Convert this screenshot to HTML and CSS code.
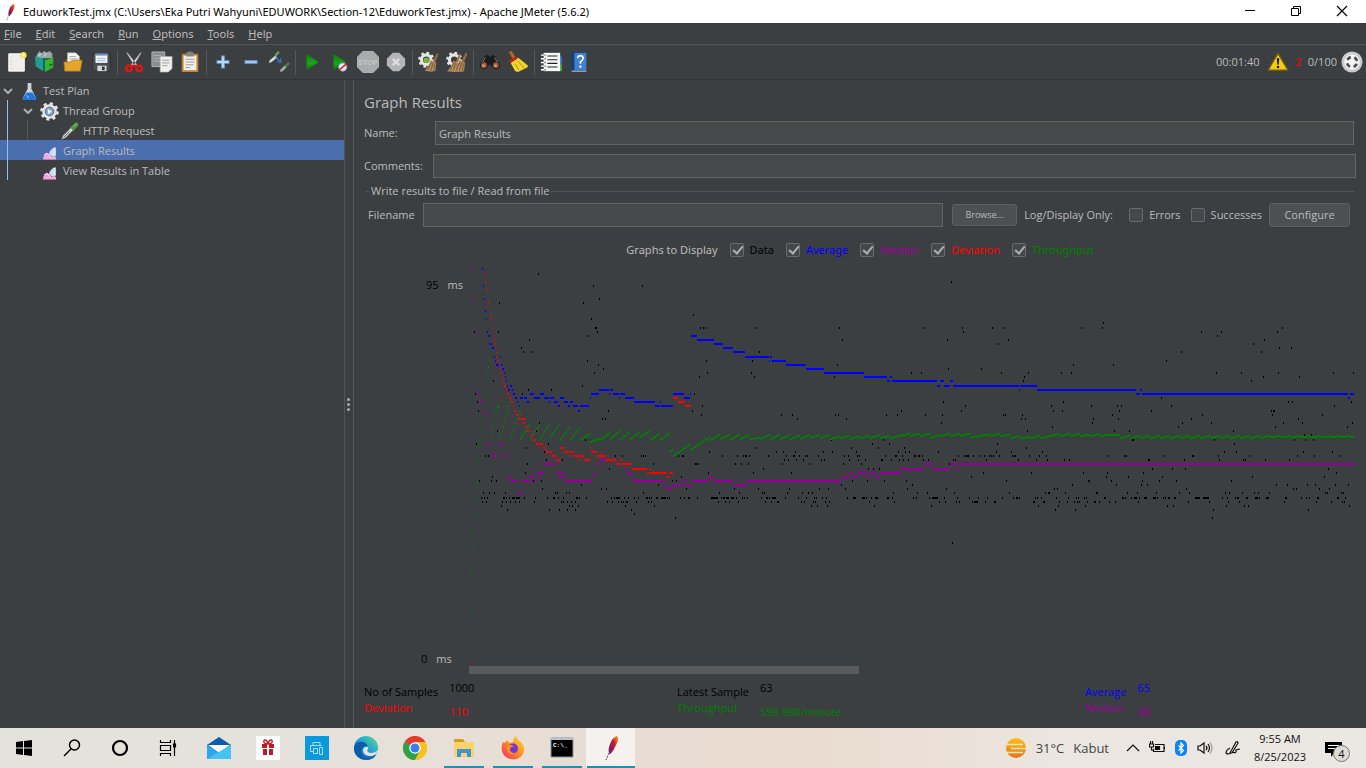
FILE: index.html
```html
<!DOCTYPE html>
<html lang="en">
<head>
<meta charset="utf-8">
<title>EduworkTest.jmx - Apache JMeter (5.6.2)</title>
<link rel="stylesheet" href="styles.css">
</head>
<body>
<svg class="defs" width="0" height="0" aria-hidden="true">
  <defs>
    <linearGradient id="feather" x1="1" y1="0" x2="0" y2="1"><stop offset="0" stop-color="#f79a1c"/><stop offset=".4" stop-color="#d22128"/><stop offset=".7" stop-color="#97144d"/><stop offset="1" stop-color="#6b2c91"/></linearGradient>
    <linearGradient id="green" x1="0" y1="0" x2="0" y2="1"><stop offset="0" stop-color="#0d7a0d"/><stop offset=".6" stop-color="#18a818"/><stop offset="1" stop-color="#0a6b0a"/></linearGradient>
    <linearGradient id="edge" x1="0" y1="1" x2="1" y2="0"><stop offset="0" stop-color="#0c59a4"/><stop offset=".5" stop-color="#1b9de2"/><stop offset="1" stop-color="#5fe07a"/></linearGradient>
    <linearGradient id="fox" x1="1" y1="0" x2="0" y2="1"><stop offset="0" stop-color="#ffe226"/><stop offset=".5" stop-color="#ff8a1e"/><stop offset="1" stop-color="#f0267b"/></linearGradient>
    <linearGradient id="sun" x1="0" y1="0" x2="0" y2="1"><stop offset="0" stop-color="#fbc015"/><stop offset="1" stop-color="#e8731a"/></linearGradient>
    <symbol id="i-feather" viewBox="0 0 24 24"><path d="M17.500 0c2 1 2 4 0 8l-3 6-3 4-1.500-.5-.5-3.500c.5-4 2-8 4-11z" fill="url(#feather)"/><path d="M10 17l-3 7M14.500 5l-4 11" stroke="#6d2a6a" fill="none" stroke-dasharray="2 1"/></symbol>
    <symbol id="i-graph" viewBox="0 0 15 14"><path d="M1 13.500l.5-3.500 3-3 3 1 2 3 3-1 1.500 1v2.500z" fill="#f2a6dc"/><path d="M7 8c1-4 3-6 6.500-7v8l-3 2z" fill="#c7dcf5"/><path d="M13 2v8" stroke="#fff"/><path d="M2 9l3-2 4 5" fill="none" stroke="#ffd6f2"/></symbol>
    <symbol id="i-cog" viewBox="0 0 24 24"><circle cx="12" cy="12" r="7" fill="none" stroke="#e5e5e2" stroke-width="4.500"/><circle cx="12" cy="12" r="10" fill="none" stroke="#e5e5e2" stroke-width="3.500" stroke-dasharray="3.900 3.954"/></symbol>
    <symbol id="i-pipette" viewBox="0 0 24 24"><path d="M2 22l2-5L14 7l3 3L7 20z" fill="#d8ddd8" stroke="#667" stroke-width=".8"/><path d="M5 19l7-7" stroke="#4e6b4e" stroke-width="1.200"/><path d="M13 6l2-1 4-4q3-1 4 1t-1 4l-4 4-1 2z" fill="#4b9b3b"/><path d="M17 6l4-4" stroke="#9bd38b"/></symbol>
    <symbol id="i-broom" viewBox="0 0 24 24"><path d="M20 0l2 1-4 10-3-1z" fill="#9b6d3d"/><path d="M12 9l7 3-1 11-5 1-9-1c4-4 6-9 8-14z" fill="#b58d63"/><path d="M13 11L8 22m7-10l-3 11m5-10l-1 10" stroke="#6b4926" stroke-width="1"/></symbol>
  </defs>
</svg>

<header class="titlebar">
  <svg class="ic16"><use href="#i-feather"/></svg>
  <h1 class="title">EduworkTest.jmx (C:\Users\Eka Putri Wahyuni\EDUWORK\Section-12\EduworkTest.jmx) - Apache JMeter (5.6.2)</h1>
  <div class="winbuttons">
    <button aria-label="Minimize"><svg width="12" height="12"><path d="M1 5.500h10" stroke="#000"/></svg></button>
    <button aria-label="Restore"><svg width="12" height="12" fill="none" stroke="#000"><path d="M1.500 3.500h7v7h-7zM3.500 3.500v-2h7v7h-2"/></svg></button>
    <button aria-label="Close"><svg width="12" height="12"><path d="M1 1l10 10M11 1L1 11" stroke="#000" stroke-width="1.200"/></svg></button>
  </div>
</header>

<nav class="menubar" aria-label="Main menu">
  <button><u>F</u>ile</button><button><u>E</u>dit</button><button><u>S</u>earch</button><button><u>R</u>un</button><button><u>O</u>ptions</button><button><u>T</u>ools</button><button><u>H</u>elp</button>
</nav>

<div class="toolbar" role="toolbar">
  <button aria-label="New"><svg viewBox="0 0 24 24"><path d="M3 3h17v19H3z" fill="#eeeeec" stroke="#fff"/><path d="M5.500 6v13" stroke="#bbb" stroke-dasharray="1 3"/><circle cx="19" cy="4.500" r="3.500" fill="#f5e04a"/><circle cx="19" cy="4.500" r="1.500" fill="#fffbd0"/></svg></button>
  <button aria-label="Templates"><svg viewBox="0 0 24 24"><path d="M3 8V4l3-4 2 3 3-3 3 2 3-2 3 3v5z" fill="#9aa7a5"/><path d="M5 6l3-4M11 6l3-4" stroke="#dfe6e5"/><path d="M1 6l9 2v14l-8-5z" fill="#1e9e8f"/><path d="M10 8l3 1v13l-3-1z" fill="#16695f"/><path d="M12 10l9-3v11l-9 5z" fill="#35b62a"/><path d="M17 14h3v2h-3z" fill="#12610e"/></svg></button>
  <button aria-label="Open"><svg viewBox="0 0 24 24"><path d="M4 9h16v12H4z" fill="#8f5b0a"/><path d="M6 2h9l4 4v9H6z" fill="#f4f4f2" stroke="#bbb" stroke-width=".5"/><path d="M8 6h7M8 8.500h9" stroke="#aaa"/><path d="M2 12h7l2-2h11l-2 12H3z" fill="#e3a52c" stroke="#a9700f" stroke-width=".8"/></svg></button>
  <button aria-label="Save"><svg viewBox="0 0 24 24"><path d="M3 3h19v19H5l-2-2z" fill="#4a4d52" stroke="#222" stroke-width=".6"/><path d="M6 3h13v10H6z" fill="#f2f5f9"/><path d="M6 3h13v2H6z" fill="#5c8fc9"/><path d="M8 8h9M8 10.500h9" stroke="#9fb4cc"/><path d="M8 16h10v6H8z" fill="#d5d7da"/><path d="M13 17h3v4h-3z" fill="#333"/></svg></button>
  <span class="sep"></span>
  <button aria-label="Cut"><svg viewBox="0 0 24 24"><path d="M4 2q0-1 1 0l11 14-3 1zM20 2q0-1-1 0L8 16l3 1z" fill="#dfe2e2" stroke="#888" stroke-width=".5"/><g fill="none" stroke="#d81818" stroke-width="3"><circle cx="6.500" cy="19" r="3"/><circle cx="17.500" cy="19" r="3"/></g><path d="M9 15h6v2H9z" fill="#c51414"/></svg></button>
  <button aria-label="Copy"><svg viewBox="0 0 24 24"><path d="M1 1h14v16H1z" fill="#8a8d8f" stroke="#b5b7b8"/><path d="M3 5h8M3 8h8M3 11h8" stroke="#b5b7b8"/><path d="M10 6h13v13l-4 4h-9z" fill="#efefed" stroke="#aaa" stroke-width=".7"/><path d="M12 10h8M12 13h8M12 16h6" stroke="#999"/></svg></button>
  <button aria-label="Paste"><svg viewBox="0 0 24 24"><rect x="3" y="3" width="18" height="20" rx="1" fill="#c78423"/><path d="M5 5h14v16H5z" fill="#efefed"/><path d="M8 2q4-3 8 0v4H8z" fill="#83867c"/><path d="M7 9h10M7 12h10M7 15h9M7 18h5" stroke="#999"/></svg></button>
  <span class="sep"></span>
  <button aria-label="Expand all"><svg viewBox="0 0 24 24"><path d="M12 5v14M5 12h14" stroke="#72a3da" stroke-width="4"/><path d="M12 6v12M6 12h12" stroke="#bcd8f5" stroke-width="2"/></svg></button>
  <button aria-label="Collapse all"><svg viewBox="0 0 24 24"><path d="M5 12h14" stroke="#72a3da" stroke-width="4"/><path d="M6 12h12" stroke="#a6c8ee" stroke-width="2"/></svg></button>
  <button aria-label="Toggle"><svg viewBox="0 0 24 24"><path d="M1 13l1-3 6-5 2 2-6 5z" fill="#d8ddd8"/><path d="M8 5l4-4" stroke="#5ba84a" stroke-width="2.500"/><path d="M8 7l6 5m0-4v4h-4" stroke="#3a78d0" stroke-width="1.300" fill="none"/><path d="M13 23l1-3 5-5 2 2-5 5z" fill="#a9ada9"/><path d="M19 17l4-4" stroke="#497c3f" stroke-width="2.500"/></svg></button>
  <span class="sep"></span>
  <button aria-label="Start"><svg viewBox="0 0 24 24"><path d="M6 3l13 9L6 21z" fill="url(#green)"/></svg></button>
  <button aria-label="Start no pauses"><svg viewBox="0 0 24 24"><path d="M5 3l13 9-13 9z" fill="url(#green)"/><circle cx="15" cy="17.500" r="4.500" fill="#dce9f8" stroke="#7c9cc2"/><path d="M11 21l8-7" stroke="#d22" stroke-width="1.800"/></svg></button>
  <button aria-label="Stop" disabled><svg viewBox="0 0 24 24"><path d="M7 0h10l7 7v10l-7 7H7l-7-7V7z" fill="#a9abac" stroke="#b8babb"/><text x="12" y="15" class="stoptext">STOP</text></svg></button>
  <button aria-label="Shutdown" disabled><svg viewBox="0 0 24 24"><path d="M8.500 2h7L22 8.500v7L15.500 22h-7L2 15.500v-7z" fill="#b3b5b6"/><path d="M8.500 8.500l7 7m0-7l-7 7" stroke="#dcdedf" stroke-width="2.800"/></svg></button>
  <span class="sep"></span>
  <button aria-label="Clear"><svg viewBox="0 0 24 24"><use href="#i-cog" x="0" y="0" width="18" height="19"/><circle cx="9" cy="10" r="3" fill="#75b932"/><use href="#i-broom" x="4" y="1" width="20" height="23"/></svg></button>
  <button aria-label="Clear all"><svg viewBox="0 0 24 24"><use href="#i-cog" x="0" y="0" width="18" height="19"/><use href="#i-broom" x="-2" y="2" width="20" height="22"/><use href="#i-broom" x="4" y="1" width="21" height="23"/></svg></button>
  <span class="sep"></span>
  <button aria-label="Search"><svg viewBox="0 0 24 24"><path d="M6 6l3-2 2 2h2l2-2 3 2 5 10-5 4-5-5h-2l-5 5-5-4z" fill="#1b1b1b"/><g stroke="#111"><circle cx="5.500" cy="15.500" r="4" fill="#8e5737"/><circle cx="18.500" cy="15.500" r="4" fill="#8e5737"/></g><path d="M7 7l-3 5M17 7l3 5" stroke="#888"/><circle cx="5" cy="16" r="1.500" fill="#d29a77"/><circle cx="18" cy="16" r="1.500" fill="#d29a77"/></svg></button>
  <button aria-label="Reset search"><svg viewBox="0 0 24 24"><path d="M2 1l3-1 5 8-3 2z" fill="#b06a1c"/><path d="M4 13l8-6 11 9-1 2-10 5-3-1z" fill="#f0d52c"/><path d="M9 14l4 7m-1-10l7 8" stroke="#a88d10"/><path d="M2 11l7-5 3 2-8 5z" fill="#c9201c"/></svg></button>
  <span class="sep"></span>
  <button aria-label="Function helper"><svg viewBox="0 0 24 24"><path d="M20 6h4v14h-4z" fill="#2a6fd0"/><path d="M20 15h4v7h-4z" fill="#38a52c"/><path d="M4 2h18v20H4z" fill="#f6f6f4"/><path d="M8 5.500h11M8 9.500h11M8 13.500h11M8 17.500h11" stroke="#222" stroke-width="1.100"/><path d="M1 4.500h4M1 8.500h4M1 12.500h4M1 16.500h4M1 20.500h4" stroke="#fff" stroke-width="1.500"/><path d="M5 4.500h1M5 8.500h1M5 12.500h1M5 16.500h1M5 20.500h1" stroke="#222" stroke-width="1.500"/></svg></button>
  <button aria-label="Help"><svg viewBox="0 0 24 24"><path d="M3 1h16v21H3z" fill="#173f70"/><path d="M7 2h13v19H7z" fill="#3f7fd4"/><path d="M4 22h16" stroke="#ddd"/><path d="M10.500 8q0-3 3-3t3 3q0 2-3 4v2" fill="none" stroke="#fff" stroke-width="1.800"/><circle cx="13.500" cy="17" r="1.300" fill="#fff"/></svg></button>
  <div class="status">
    <span>00:01:40</span>
    <button aria-label="Show log"><svg viewBox="0 0 24 24"><path d="M12 2.500L23 21H1z" fill="#f3cb13" stroke="#6b5a12" stroke-width="1.500" stroke-linejoin="round"/><path d="M10.700 8h2.600l-.6 7h-1.400z" fill="#111"/><circle cx="12" cy="17.500" r="1.300" fill="#111"/></svg></button>
    <span class="errors">2</span>
    <span>0/100</span>
    <svg viewBox="0 0 24 24" class="ic22"><circle cx="12" cy="12" r="11.500" fill="#c9cbca"/><circle cx="12" cy="12" r="8.500" fill="#f3f3f2"/><circle cx="12" cy="12" r="5.500" fill="none" stroke="#4c4f50" stroke-width="3" stroke-dasharray="4.600 4.040" stroke-dashoffset="-2"/></svg>
  </div>
</div>

<main class="workspace">
  <nav class="tree" aria-label="Test plan">
    <ul>
      <li class="row d0"><svg class="arrow" viewBox="0 0 10 6"><path d="M1 1l4 4 4-4"/></svg><svg class="node" viewBox="0 0 20 20"><path d="M8 1h4v6l5 10q0 2-2 2H5q-2 0-2-2L8 7z" fill="#c9d4de"/><path d="M7 11h6l4 6q0 2-2 2H5q-2 0-2-2z" fill="#2377d8"/><path d="M7 14l2 3" stroke="#a5d0ff"/></svg>Test Plan</li>
      <li class="row d1"><svg class="arrow" viewBox="0 0 10 6"><path d="M1 1l4 4 4-4"/></svg><svg class="node" viewBox="0 0 24 24"><use href="#i-cog"/><circle cx="12" cy="12" r="5.500" fill="#87a5d3" stroke="#41547a"/><path d="M10 9l5 3-5 3z" fill="#fff"/></svg>Thread Group</li>
      <li class="row d2"><svg class="node" viewBox="0 0 24 24"><use href="#i-pipette"/></svg>HTTP Request</li>
      <li class="row d1 selected"><span class="arrow"></span><svg class="node leaf"><use href="#i-graph"/></svg>Graph Results</li>
      <li class="row d1"><span class="arrow"></span><svg class="node leaf"><use href="#i-graph"/></svg>View Results in Table</li>
    </ul>
  </nav>
  <div class="splitter"><i></i><i></i><i></i></div>
  <section class="panel">
    <h2>Graph Results</h2>
    <div class="field name"><label for="name">Name:</label><input id="name" type="text" value="Graph Results"></div>
    <div class="field comments"><label for="comments">Comments:</label><input id="comments" type="text"></div>
    <fieldset class="filebox">
      <legend>Write results to file / Read from file</legend>
      <div class="filerow">
        <label for="file">Filename</label><input id="file" type="text">
        <button class="btn small">Browse...</button>
        <span class="only">Log/Display Only:</span>
        <label class="check"><input type="checkbox">Errors</label>
        <label class="check"><input type="checkbox">Successes</label>
        <button class="btn">Configure</button>
      </div>
    </fieldset>
    <div class="series">
      <span>Graphs to Display</span>
      <label class="check black"><input type="checkbox" checked>Data</label>
      <label class="check blue"><input type="checkbox" checked>Average</label>
      <label class="check purple"><input type="checkbox" checked>Median</label>
      <label class="check red"><input type="checkbox" checked>Deviation</label>
      <label class="check green"><input type="checkbox" checked>Throughput</label>
    </div>
    <div class="chart">
      <div class="axis"><span><b>95</b>ms</span><span class="zero"><b>0</b>ms</span></div>
      <div class="plot"><svg id="plot" width="887" height="402" shape-rendering="crispEdges"></svg><div class="scroll"></div></div>
    </div>
    <dl class="totals">
      <div class="col"><div class="names"><dt class="black">No of Samples</dt><dt class="red">Deviation</dt></div><div class="vals"><dd class="black">1000</dd><dd class="red">110</dd></div></div>
      <div class="col"><div class="names"><dt class="black">Latest Sample</dt><dt class="green">Throughput</dt></div><div class="vals"><dd class="black">63</dd><dd class="green">598.988/minute</dd></div></div>
      <div class="col"><div class="names"><dt class="blue">Average</dt><dt class="purple">Median</dt></div><div class="vals"><dd class="blue">65</dd><dd class="purple">48</dd></div></div>
    </dl>
  </section>
</main>

<footer class="taskbar">
  <div class="apps system">
    <button aria-label="Start menu"><svg viewBox="0 0 24 24"><path d="M4 6l7-1v6.500H4zM12 5l8-1v7.500h-8zM4 12.500h7V19l-7-1zM12 12.500h8V20l-8-1z"/></svg></button>
    <button aria-label="Search"><svg viewBox="0 0 24 24" fill="none" stroke="#000" stroke-width="1.500"><circle cx="14.500" cy="9" r="5"/><path d="M11 13l-7 7"/></svg></button>
    <button aria-label="Cortana"><svg viewBox="0 0 24 24" fill="none" stroke="#000" stroke-width="2.200"><circle cx="12" cy="12" r="7"/></svg></button>
    <button aria-label="Task view"><svg viewBox="0 0 24 24" fill="none" stroke="#000" stroke-width="1.200"><path d="M4.500 4v2.500h10V4M4.500 20v-2.500h10V20M4.500 9.500h10v5h-10zM18.500 4v16"/><path d="M17.500 8h2v3h-2z" fill="#000"/></svg></button>
  </div>
  <div class="apps">
    <button aria-label="Mail"><svg viewBox="0 0 24 24"><path d="M0 9L12 1l12 8v14H0z" fill="#0b5cad"/><path d="M1 9h22l-11 8z" fill="#f5f6f8"/><path d="M0 9l12 8-12 6z" fill="#2ba8ec"/><path d="M24 9v14H0z" fill="#45c3f2"/></svg></button>
    <button aria-label="Rewards"><svg viewBox="0 0 24 24"><path fill="#fff" d="M0 0h24v24H0z"/><path d="M6 8h5v4H6zM13 8h5v4h-5zM7 13h4v6H7zM13 13h4v6h-4z" fill="#c5171f"/><path d="M12 8c-5 0-5-4-3-4 2 0 3 4 3 4s1-4 3-4c2 0 2 4-3 4z" fill="none" stroke="#c5171f" stroke-width="1.300"/></svg></button>
    <button aria-label="Printer"><svg viewBox="0 0 24 24"><path fill="#0a99dc" d="M0 0h24v24H0z"/><g fill="none" stroke="#d5effb" stroke-width=".8"><path d="M8 9.500V6.500h7v3M8 15.500H5.500v-6h11M8.500 12.500h4v5h-4zM14.500 11.500h3v7h-3z"/></g></svg></button>
    <button aria-label="Edge"><svg viewBox="0 0 24 24"><circle cx="12" cy="12" r="12" fill="url(#edge)"/><path d="M0 12C1 4 12 4 14 11c-4-2-8 2-6 7 2 4 9 4 14 1-4 6-13 6-18 2Q0 18 0 12z" fill="#0d5cab"/><path d="M14 11c1 2-2 3 0 5s7 1 10-2q-2 7-9 6-6-1-6-6 1-4 5-3z" fill="#e5e1dc"/><path d="M8 18q3 5 14 1-4 6-13 4z" fill="#1565b4"/></svg></button>
    <button aria-label="Chrome"><svg viewBox="0 0 24 24"><circle cx="12" cy="12" r="12" fill="#fbc116"/><path d="M12 12L1.600 6a12 12 0 0 1 20.800 0z" fill="#e33b2e"/><path d="M12 12L1.600 6A12 12 0 0 0 12 24l5-9z" fill="#2ba24c"/><path d="M12 6h10.400a12 12 0 0 1-10.400 18l5-9z" fill="#fbc116"/><circle cx="12" cy="12" r="5.800" fill="#fff"/><circle cx="12" cy="12" r="4.500" fill="#3b7ded"/></svg></button>
    <button class="open" aria-label="File Explorer"><svg viewBox="0 0 24 24"><path d="M2 3h9l2 3h9v14H2z" fill="#d99a1c"/><path d="M2 6h20v15H2z" fill="#f9d268"/><path d="M5 21v-8h14v8h-4v-4H9v4z" fill="#3c93d6"/></svg></button>
    <button class="open" aria-label="Firefox"><svg viewBox="0 0 24 24"><path d="M2 6l2 1 2-3 2 3q3-1 4-1 0-4 3-6 1 4 5 6 4 4 3 9-2 8-10 8.500Q3 23 1 15 0 10 2 6z" fill="url(#fox)"/><circle cx="12" cy="12.500" r="5" fill="#6a3bd1"/><path d="M6 9q5-1 7 2-3-1-4 2 0 4 5 4-5 3-8-2z" fill="#ff8a26"/></svg></button>
    <button class="open" aria-label="Command Prompt"><svg viewBox="0 0 24 24"><path d="M1 2h22v19H1z" fill="#000" stroke="#8f9499"/><path d="M1 2h22v2H1z" fill="#b8c3cf"/><text x="3" y="11" class="cmd">C:\_</text></svg></button>
    <button class="open active" aria-label="JMeter"><svg><use href="#i-feather"/></svg></button>
  </div>
  <div class="tray">
    <button class="weather"><svg width="24" height="24" viewBox="0 0 24 24"><circle cx="13" cy="12" r="10" fill="url(#sun)"/><path d="M4 8.500h16M8 12.500h16M2 16.500h18" stroke="#f7e2b5" stroke-width="1.500"/></svg><span>31°C</span><span>Kabut</span></button>
    <div class="trayicons">
      <svg viewBox="0 0 16 16"><path d="M2 11l6-6 6 6"/></svg>
      <svg viewBox="0 0 16 16"><path d="M6 4.500h9v7H4.500V9M15.500 7v2M3.500 1v3M1.500 1v3M.5 4h4v3h-4zM2.500 7v3h2"/><path d="M6.500 6.500h4v3h-4z" fill="#000"/></svg>
      <svg viewBox="0 0 16 16"><rect x="2" y="0" width="12" height="16" rx="5" fill="#0a84f5" stroke="none"/><path d="M5.500 5.500l5 5L8 13V3l2.500 2.500-5 5" stroke="#fff"/></svg>
      <svg viewBox="0 0 16 16"><path d="M1 6h2l4-3v10l-4-3H1zM9 6q2 2 0 4M11 4q3 4 0 8"/><path d="M13 2.500q4 5.500 0 11" stroke="#999"/></svg>
      <svg class="pen" viewBox="0 0 16 16"><path d="M5 13L11 2q2-1 2 1L7 13zM5 8q-4 2-4 5 2 2 5 0M7 12q5 2 4-2l4-1"/></svg>
    </div>
    <time class="clock" datetime="2023-08-25T09:55"><span>9:55 AM</span><span>8/25/2023</span></time>
    <button class="notes" aria-label="Notifications"><svg width="17" height="16"><path d="M0 1h17v11H9l-3 4v-4H0z"/><path d="M3 4.500h11M3 7.500h11" stroke="#fff"/></svg><span class="badge">4</span></button>
  </div>
</footer>
<script src="chart.js"></script>
</body>
</html>
```
FILE: styles.css
```css
* { box-sizing: border-box; }
body {
  margin: 0;
  min-height: 100vh;
  display: flex;
  flex-direction: column;
  background: #3c3f41;
  color: #bbbbbb;
  font: 11px/16px "Open Sans", "Noto Sans", sans-serif;
}
button, input { font: inherit; color: inherit; }
button { border: 0; background: none; padding: 0; margin: 0; }
ul, dl, dd, h1, h2 { margin: 0; padding: 0; font-weight: normal; }
svg { display: block; }
.defs { position: absolute; }
.black { color: #000; }
.blue { color: #0000ff; }
.purple { color: #990099; }
.red { color: #ff0000; }
.green { color: #008000; }

.titlebar { display: flex; align-items: center; height: 23px; padding-left: 2px; background: #fff; color: #000; }
.ic16 { width: 16px; height: 16px; }
.title { margin-left: 5px; font: 11px/16px "Noto Sans", sans-serif; white-space: nowrap; }
.winbuttons { margin-left: auto; display: flex; align-self: stretch; }
.winbuttons button { width: 46px; display: flex; align-items: center; justify-content: center; padding: 0 2px 2px 0; }

.menubar { display: flex; gap: 14px; height: 22px; padding: 0 4px; border-bottom: 1px solid #515355; font: 11px/16px "Noto Sans", sans-serif; }

.toolbar { display: flex; align-items: center; height: 35px; padding: 0 3px; border-bottom: 1px solid #323537; }
.toolbar button { flex: none; width: 28px; height: 28px; display: flex; align-items: center; justify-content: center; }
.toolbar button svg { width: 22px; height: 22px; }
.sep { width: 1px; height: 25px; margin: 0 2px; background: #555759; }
.stoptext { font: bold 8px "Liberation Sans", sans-serif; fill: #c4c6c7; text-anchor: middle; }
.status { margin-left: auto; display: flex; align-items: center; gap: 4px; }
.ic22 { width: 22px; height: 22px; }
.errors { color: #ff0000; margin-right: 2px; }

.workspace { flex: 1; display: flex; min-height: 0; }
.tree { width: 345px; border-right: 1px solid #515355; }
.tree ul { list-style: none; }
.row { position: relative; display: flex; align-items: center; height: 20px; padding-top: 2px; }
.d0 { padding-left: 3px; }
.d1 { padding-left: 23px; }
.d2 { padding-left: 60px; }
.d1::before, .d2::before { content: ""; position: absolute; left: 7px; top: 0; bottom: 0; width: 1px; background: #8cc4f0; }
.d2::after { content: ""; position: absolute; left: 27px; top: 0; bottom: 0; width: 1px; background: #56595b; }
.selected { background: #4b6eaf; }
.arrow { width: 10px; height: 6px; margin-right: 7px; fill: none; stroke: #adadad; stroke-width: 2; }
.node { width: 19px; height: 19px; margin-right: 4px; }
.leaf { width: 15px; height: 14px; margin: 4px 6px 0 2px; }

.splitter { width: 9px; padding-right: 2px; border-right: 1px solid #555759; display: flex; flex-direction: column; align-items: center; justify-content: center; gap: 2px; }
.splitter i { width: 3px; height: 3px; border-radius: 2px; background: #adadad; }

.panel { flex: 1; min-width: 0; display: flex; flex-direction: column; padding: 11px 10px 8px; }
.panel h2 { font-size: 15px; line-height: 22px; margin-bottom: 8px; }
.field { display: flex; align-items: center; margin-bottom: 9px; }
.field input, .filerow input[type="text"] { flex: 1; min-width: 0; height: 24px; padding: 0 3px; background: #45494a; border: 1px solid #646464; border-radius: 0; }
.name label { width: 71px; }
.name { margin-right: 2px; }
.comments label { width: 69px; }
.filebox { min-width: 0; margin: -4px 2px 0; padding: 0 4px 0 2px; border: 0; border-top: 1px solid #515355; }
.filebox legend { padding: 0 2px; margin-left: 1px; line-height: 16px; }
.filerow { display: flex; align-items: center; padding-top: 4px; }
.filerow > label:first-child { width: 55px; }
.btn { height: 24px; width: 81px; margin-left: 7px; border: 1px solid #5e6060; border-radius: 3px; background: #4c5052; box-shadow: 0 1px #35383a; }
.btn.small { width: 65px; height: 22px; margin: 0 7px 0 9px; font-size: 9px; }
.only { width: 105px; }
.check { display: flex; align-items: center; gap: 6px; }
.check + .check { margin-left: 10px; }
.check input { appearance: none; width: 14px; height: 14px; margin: 0; border: 1px solid #6b6b6b; border-radius: 2px; background: #43494a; }
.check input:checked::before { content: ""; display: block; width: 4px; height: 8px; margin: 0 0 0 4px; border: solid #b0b0b0; border-width: 0 2px 2px 0; transform: rotate(40deg); }
.series { display: flex; justify-content: center; align-items: center; gap: 12px; height: 24px; margin-top: 11px; font-family: "Noto Sans", sans-serif; }
.series .check + .check { margin-left: 0; }

.chart { flex: 1; display: flex; margin-top: 2px; }
.axis { width: 105px; display: flex; flex-direction: column; justify-content: space-between; padding: 13px 0 7px; }
.axis span { display: flex; gap: 9px; padding-left: 62px; }
.axis .zero { padding-left: 57px; }
.axis b { font-weight: normal; color: #000; }
.plot { flex: 1; min-width: 0; overflow: hidden; display: flex; flex-direction: column; justify-content: flex-end; }
.scroll { width: 44%; height: 8px; background: #595b5d; }
.totals { display: grid; grid-template-columns: 313fr 408fr 271fr; margin-top: 6px; }
.col { display: flex; gap: 11px; }
.names { padding-top: 4px; }
.vals { display: flex; flex-direction: column; gap: 8px; }

.taskbar { display: flex; height: 40px; background: linear-gradient(90deg, #e4e2dc, #e6e1db 25%, #e9dcd2 48%, #eadcd0 60%, #ebe6e1 78%, #ebe7e3); color: #111; }
.apps { display: flex; }
.apps button { width: 49px; display: flex; align-items: center; justify-content: center; }
.apps.system button { width: 48px; }
.apps.system { margin-right: 2px; }
.apps svg { width: 24px; height: 24px; }
.apps .open { background: linear-gradient(#0a99bd, #0a99bd) center bottom / 40px 2px no-repeat; }
.apps .active { background: linear-gradient(#0a99bd, #0a99bd) center bottom / 48px 2px no-repeat #f5f1ee; }
.cmd { font: bold 6px "Liberation Mono", monospace; fill: #fff; }
.tray { margin-left: auto; display: flex; align-items: center; padding-right: 17px; }
.weather { display: flex; align-items: center; gap: 9px; font-size: 13px; color: #444; }
.trayicons { display: flex; gap: 8px; margin-left: 16px; }
.trayicons svg { width: 16px; height: 16px; fill: none; stroke: #111; stroke-width: 1.2; }
.trayicons .pen { margin-left: 4px; }
.clock { width: 78px; display: flex; flex-direction: column; align-items: center; line-height: 18px; }
.notes { position: relative; width: 30px; height: 24px; padding: 1px 0 0 6px; }
.badge { position: absolute; right: -1px; top: 9px; width: 17px; height: 17px; border: 1px solid #777; border-radius: 9px; background: #dedbd7; line-height: 15px; }
```
FILE: chart.js
```javascript
// Marks are kept per strip, in thirds of a pixel: "row: x x from-to ...".
const ORIGIN = { x: 469, y: 264 };
const strips = {
  400: {
    "#000": `42:415|78:580 727|117:598|129:298 550|165:880|177:574|204:585-591|216:223 295 592|228:565|240:388|264:364|276:370 394|303:562|315:595|327:610|339:583|351:898|363:280|378:547|390:385 454|402:226 367 883|426:232|453:235 625 877|477:607 616|489:418|513:292 409|540:556|552:229 445|564:379|576:433|588:256 265 646 667 724 730 736 835 846-852|600:439 487|612:382 759 885-891 895|627:628|639:376|651:277 843|663:238 274 289 400 406 424 817 829|675:544 775|687:427 604 619 859|699:250 268 283 316 466 472 499 508 730|714:244 253 262 309-315 320 328 336-345 348-360 373 406 442 460 463 475 489-493 528-535 538 559 634 643 648-660 673 685 703 715 738-744 747 755 769 773 783-798 802 808 841 852 864-870 892|726:247 259 307 319 331 346 358 403 484 490 502 514 526 622 637 655 664 670 678-684 709 745 754|738:304 508 517 535 676 763|750:322 448 478 502 526 694|762:703|774:826`,
    "#909": `28:217|117:219-226|216:225-232|402:231-243|426:237-249|453:249-255|465:214 255-261|552:261-273 294-309|588:273-294 309-322|600:456-459 600-621 648-651|612:420-423 432-456 459-471 588-600|627:675-681|639:396-400 414-432 471-490 582-588 681-693|651:321-333 387-400 411-420 477-495 576-582 690-699|663:333-351 366-390 402-408 495-576 699-789 846-855 876-900|675:789-801 816-846 855-876|687:801-816|699:351-366`,
    "#00f": `28:247|78:250|117:252-256|153:256|177:259|216:262|228:264-267 270-273 873-891|240:891-900|252:267-270 273-276|264:276-282|291:282-285 300-303|303:285-288|315:288-297 303-306|327:306-312|339:312-315|351:315-318|363:318-321|378:321-324 330-336|390:324-330 336-339 597-627 630-639|402:339-345 390-402 420-432 573-597 627-630 639-657 660-675 819-852 870-873|414:345-351 360-369 372-381 402-420 432-447 450-462 480-492 570-573 657-660 675-702 852-870|426:351-354 381-387 447-450 462-474 492-504 510-519 702-765 780-783|438:357-360 474-480 504-510 519-533 540-567 765-780 783-819|453:534-540`,
    "#f00": `42:256|66:259|90:262|129:265|141:268|165:271|177:274|204:277|228:280|240:283|252:286|276:289|291:292|303:295|315:298|327:301|339:304|351:307|363:310|378:312-318|390:319|402:321-327|414:327-333|426:333-339|438:340|453:342-348|465:348-354 361|477:354-360 363-369 369-375|489:369-375|501:375-381|513:381-387 390|525:393-399|540:399-408|552:408-417 420-429|564:417-420 429-438 480-492 570-573|576:438-447 450-456 492-507 510-522 573-591|588:447-450 456-468 507-510 522-537 540-552 591-618|600:468-480 537-540 552-570 618-648 660-666|612:648-660 666-696|627:696-741 750-753|639:741-750 753-801 810-819|651:801-810|414:819-834|426:834-855|438:855-873|1207:211`
  },
  700: {
    "#000": `66:754|204:1 10 16 169 418 673 787 877 913|216:790|240:427 742 925|252:895|276:178|303:19 157|315:412|327:745 844|339:22 154 634 664 904 985|351:163 403 973|363:970|426:730|438:7 796|453:604 784|465:4 244 277 406 415 559 592 676 727 910 916 967|477:292 439 964 976|489:724|513:982|540:394 550|552:517 568 892|564:166 454 535 613 979|576:28 229 250 286 370 397 469 595 616 628 715 889 934|588:67 112 130 135-141 148 205 259 279-285 298 316 322 355 433 445 472 478 556 585-591 607 642-648 654-660 667 775 793 798-807 820 838 853 868 874 880 898 937 942-948 988|600:253 265 289 310 364 373 448 475 496 543-549 574 598 610 625 670 685 760 766 859 955|612:106 124 145 247 328 430 484 748|627:190 505 520 538|639:25 160 274 850|651:814|663:457 502 553 619 919|675:424 637|687:103 175 268 358 385 436 622 739|699:58 118 187 193 262 307 325 337 580 652 682 763 928|714:33-54 64 69-75 78-87 93-102 109 127 133 142 184 198-204 208 216-228 256 295 319 343 349 367 379 442 459-468 486-495 499 514 525-534 561-567 577 640 648 688 696-714 733 772 808 835 862 907 940 948-954 958|726:55 76 88 115 196 214 231-237 304 313 340 346 376 388 508 583 718 736 769 778 817 822-834 856 882-888|738:334 352 382 523 694|849:757`,
    "#909": `612:672-700 750-771 774-777 780-990|627:600-672 700-750 772 778|639:450-459 474-502 504-507 510-513 516-526 540-600|651:24-39 420-423 426-450 459-474 502 508 514 526-540|663:0-24 39-99 138-141 144-420 423-426|675:99-138 142`,
    "#00f": `240:0-42|252:42-69|264:69-99|276:99-135|291:135-207 210-216|303:207-210 216-258|315:258-318|327:318-372|339:372-492|351:492-561 570-576|363:561-570 576-711 720-732 750-759|378:711-720 732-750 759-957 960-990|390:957-960`
  },
  1030: {
    "#000": `189:220|204:154 217 757|216:514 574 742|228:562|240:703|252:670|264:748 784|276:454 694|303:409|315:130 250|339:94 124 559 634 745 910 970|351:700 808|363:664|414:394|426:100 775 787 964|438:64 184 262 274 424 913|453:70 97 268 364 724 729-735|465:247 517 727 877|477:190 265 484 805|489:187 457 544 760 817 967|501:67 445 736 952|513:253 298 610|525:823 844|540:306-312 553 793 826 850|552:613|576:37 583 619 820 907|588:28 49 235 283 289 403 486-492 565 658 802 853 928|600:19 52 103 118 354-360 463 568 640 646 706 778|627:367 427 466 895|639:4 160 232 340 919|651:229 295 397 667 883|663:174-180 244 337 388 439 604|675:127 259 334 352 739 772 832 856 916 955|687:73 82 469 790 799 868 898|699:46 54-60 106 198-204 292 322 379 448 478 586 598 637 673 685 718 886 892 934 940|714:16 22 34 79 115 139 145 163 169 222-228 276-282 286 304 312-321 328 342-351 369-378 382 400 406 414-420 432-438 495-510 519-537 577 592 616 621-627 648-654 675-684 688 708-717 765-771 814 829 838 861-867 921-927 946|726:9-15 39-45 88 112 133 142 148 172 192-198 208 238 256 325 475 538 595 628 763 859 904 937 943|738:25 85 166 412 430 589 643 655 958|750:76 136 550 835|774:547`,
    "#909": `612:0-972`,
    "#00f": `378:0-21|390:21-318 330-336|402:318-330 336-954 960-972|414:954-960`
  }
};

// Throughput climbs within each group of samples, then drops back.
const climbs = {
  400: "212,1055 212,1055|214,939 214,939|217,866 217,866|220,813 220,813|223,765 223,765|226,717 226,717|229,669 229,669|232,633 232,633|235,600 235,600|238,561 238,561|241,540 241,540|244,504 244,504|247,471 247,471|250,441 250,441|253,411 253,411|256,390 256,390|259,363 259,363|262,339 262,339|265,321 265,321|268,300 268,300|271,540 290,450|292,441 297,438|301,537 328,426|331,537 358,453|361,537 388,495|391,534 418,495|421,537 448,492|451,531 478,492|481,540 508,503|511,540 538,504|541,540 568,522|571,546 598,537|600,540 628,519|631,537 658,513|661,540 688,516|691,537 718,517|721,531 748,514|751,540 778,522|781,540 808,521|811,573 817,571|820,588 868,554|871,570 898,552",
  700: "0,549 28,532|30,540 58,524|60,537 88,524|90,540 118,524|120,537 148,525|150,537 178,533|180,537 208,525|210,537 238,524|240,537 268,526|270,537 298,527|300,537 328,525|330,534 358,525|360,534 388,525|390,537 418,529|420,534 448,528|450,537 478,528|480,534 508,528|510,534 538,526|540,534 568,528|570,534 628,521|630,528 658,521|660,528 688,522|690,534 718,525|720,528 748,522|750,528 778,522|780,528 808,521|810,533 868,523|870,528 898,522|900,528 928,525|930,534 958,528|960,534 988,531",
  1030: "0,534 28,528|30,534 88,522|90,528 118,522|120,528 148,522|150,528 178,524|180,528 208,522|210,528 238,524|240,526 268,524|270,534 298,528"
};
for (let x = 300; x < 720; x += 30) climbs[1030] += `|${x},534 ${x + 28},528`;
for (let x = 720; x < 960; x += 30) climbs[1030] += `|${x},531 ${x + 28},529`;
climbs[1030] += "|960,531 971,531";

function addPath(color, d) {
  const path = document.createElementNS("http://www.w3.org/2000/svg", "path");
  path.setAttribute("fill", color);
  path.setAttribute("d", d);
  document.getElementById("plot").append(path);
}
const mark = (x, y, w) => `M${x - ORIGIN.x} ${y - ORIGIN.y}h${w}v2h${-w}z`;
const top3 = y => 260 + Math.round((y - 3) / 3);

let green = "";
for (const [left, text] of Object.entries(climbs)) {
  for (const line of text.split("|")) {
    const [[x1, y1], [x2, y2]] = line.split(" ").map(p => p.split(",").map(Number));
    const a = Math.floor(x1 / 3), b = Math.floor(x2 / 3);
    for (let x = a; x <= b; x++) {
      const y = y1 + (y2 - y1) * (b > a ? (x - a) / (b - a) : 0);
      green += mark(+left + x, top3(y), 1);
    }
  }
}

for (const color of ["#000", "#909", "green", "#00f", "#f00"]) {
  if (color === "green") { addPath("#008000", green); continue; }
  let d = "";
  for (const [left, layers] of Object.entries(strips)) {
    for (const row of (layers[color] || "").split("|").filter(Boolean)) {
      const [y, xs] = row.split(":");
      for (const x of xs.split(" ")) {
        const [from, to] = x.split("-").map(Number);
        const start = Math.floor(from / 3);
        const width = to ? Math.max(1, Math.round(to / 3) - start) : 1;
        d += mark(+left + start, top3(+y), width);
      }
    }
  }
  addPath(color, d);
}
```
